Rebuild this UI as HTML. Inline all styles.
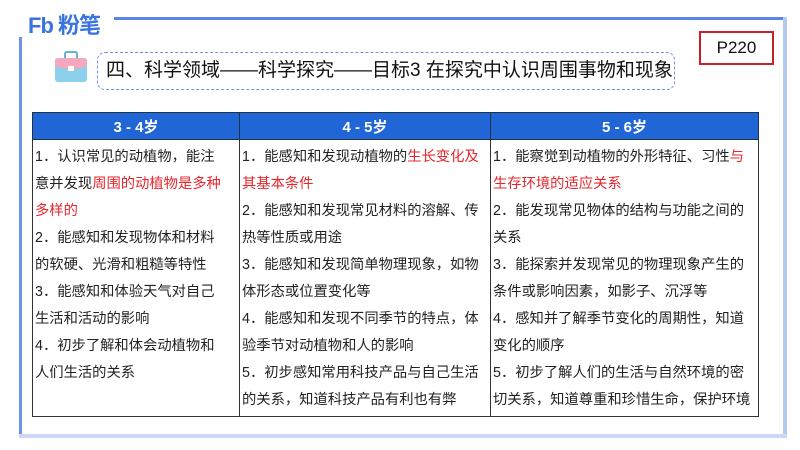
<!DOCTYPE html>
<html><head><meta charset="utf-8"><style>
*{margin:0;padding:0;box-sizing:border-box}
body{width:800px;height:450px;background:#fff;position:relative;overflow:hidden;font-family:"Liberation Sans","Noto Sans CJK SC",sans-serif}
.logo{position:absolute;left:28px;top:8px;font-size:22px;font-weight:bold;color:#3a74e0;letter-spacing:-1px}
.topline{position:absolute;left:114px;top:17px;width:672px;height:3px;background:#5b85e6}
.lb{position:absolute;left:19px;top:37px;width:3px;height:401px;background:#6d92ea}
.rb{position:absolute;left:783px;top:17px;width:4px;height:421px;background:#b5c9f3}
.bb{position:absolute;left:19px;top:434px;width:768px;height:4px;background:#cbd8f6}
.title{position:absolute;left:97px;top:52px;width:578px;height:38px;border:1.5px dashed #6d92e0;border-radius:8px;font-size:19px;line-height:35px;padding-left:8px;color:#111}
.p{position:absolute;left:699px;top:31px;width:75px;height:34px;border:2px solid #c8202a;font-size:17px;text-align:center;line-height:30px;color:#111}
table{position:absolute;left:32px;top:112px;width:727px;border-collapse:collapse;font-size:14.3px;color:#222;table-layout:fixed}
th{background:#2166d6;color:#fff;height:27px;font-size:15px;border:1px solid #234;font-weight:bold}
td{border:1px solid #333;vertical-align:top;padding:4px 1px 2px 2px;line-height:27px;white-space:nowrap;overflow:hidden;height:275px}
.r{color:#e8262d}
</style></head><body>
<div class="logo">Fb 粉笔</div>
<div class="topline"></div><div class="lb"></div><div class="rb"></div><div class="bb"></div>
<svg style="position:absolute;left:52px;top:50px" width="38" height="34" viewBox="0 0 38 34">
<path d="M13 8 V4 Q13 2 15 2 H23 Q25 2 25 4 V8" fill="none" stroke="#6aaed0" stroke-width="2"/>
<rect x="3" y="8" width="32" height="24" rx="3" fill="#8dd0ec"/>
<path d="M3 11 Q3 8 6 8 H32 Q35 8 35 11 V16 Q19 22 3 16Z" fill="#f4a7bd"/>
<rect x="16" y="16" width="6" height="5" fill="#fff"/>
</svg>
<div class="title">四、科学领域——科学探究——目标3 在探究中认识周围事物和现象</div>
<div class="p">P220</div>
<table>
<colgroup><col style="width:207px"><col style="width:251px"><col></colgroup>
<tr><th>3 - 4岁</th><th>4 - 5岁</th><th>5 - 6岁</th></tr>
<tr>
<td>1．认识常见的动植物，能注<br>意并发现<span class="r">周围的动植物是多种</span><br><span class="r">多样的</span><br>2．能感知和发现物体和材料<br>的软硬、光滑和粗糙等特性<br>3．能感知和体验天气对自己<br>生活和活动的影响<br>4．初步了解和体会动植物和<br>人们生活的关系</td>
<td>1．能感知和发现动植物的<span class="r">生长变化及</span><br><span class="r">其基本条件</span><br>2．能感知和发现常见材料的溶解、传<br>热等性质或用途<br>3．能感知和发现简单物理现象，如物<br>体形态或位置变化等<br>4．能感知和发现不同季节的特点，体<br>验季节对动植物和人的影响<br>5．初步感知常用科技产品与自己生活<br>的关系，知道科技产品有利也有弊</td>
<td>1．能察觉到动植物的外形特征、习性<span class="r">与</span><br><span class="r">生存环境的适应关系</span><br>2．能发现常见物体的结构与功能之间的<br>关系<br>3．能探索并发现常见的物理现象产生的<br>条件或影响因素，如影子、沉浮等<br>4．感知并了解季节变化的周期性，知道<br>变化的顺序<br>5．初步了解人们的生活与自然环境的密<br>切关系，知道尊重和珍惜生命，保护环境</td>
</tr></table>
</body></html>
